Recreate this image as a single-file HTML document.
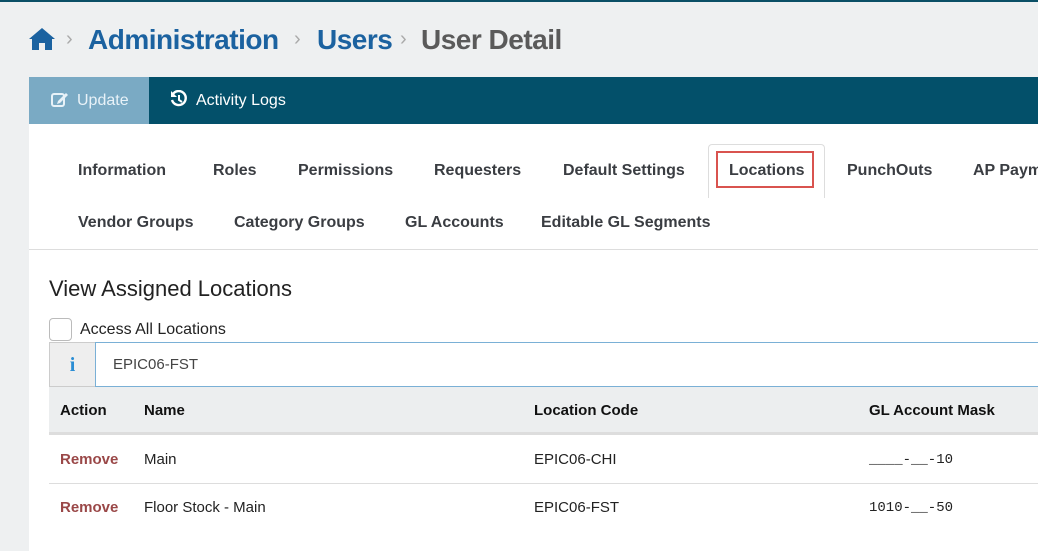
<!DOCTYPE html>
<html><head><style>
*{box-sizing:border-box;margin:0;padding:0}
body{width:1038px;height:551px;overflow:hidden;background:#eef0f1;font-family:"Liberation Sans",sans-serif;position:relative}
.abs{position:absolute;white-space:nowrap}
.bc{top:24px;font-size:28px;font-weight:bold;letter-spacing:-0.5px}
.bar{left:29px;top:77px;width:1009px;height:47px;background:#03506a}
.upd{left:29px;top:77px;width:120px;height:47px;background:#7aaac4;color:#e8f2f8;font-size:16px;line-height:47px;padding-left:22px}
.act{left:170px;top:77px;color:#fff;font-size:16px;line-height:47px}
.card{left:29px;top:124px;width:1009px;height:427px;background:#fff}
.tab{font-size:16px;font-weight:bold;color:#3a3d42}
.th{font-size:15px;font-weight:bold;color:#111}
.td{font-size:15px;color:#222}
.rm{font-size:15px;font-weight:bold;color:#9a4848}
.mono{font-family:"Liberation Mono",monospace;font-size:14px;color:#222}
</style></head><body>
<div class="abs" style="left:0;top:0;width:1038px;height:2px;background:#0a4f66"></div>
<svg class="abs" style="left:28px;top:27px" width="28" height="24" viewBox="0 0 28 24"><path d="M14 1 L1 12 L4 12 L4 23 L11 23 L11 16 L17 16 L17 23 L24 23 L24 12 L27 12 Z" fill="#1b62a0"/></svg>
<div class="abs" style="left:66px;color:#aaa;font-size:20px;top:28px">›</div>
<div class="abs bc" style="left:88px;color:#1b62a0">Administration</div>
<div class="abs" style="left:294px;color:#aaa;font-size:20px;top:28px">›</div>
<div class="abs bc" style="left:317px;color:#1b62a0">Users</div>
<div class="abs" style="left:400px;color:#aaa;font-size:20px;top:28px">›</div>
<div class="abs bc" style="left:421px;color:#5a5a5a">User Detail</div>
<div class="abs bar"></div>
<div class="abs upd"><svg width="18" height="16" viewBox="0 0 18 16" style="vertical-align:-2px;margin-right:8px"><rect x="1" y="3" width="12" height="12" rx="2" fill="none" stroke="#e8f2f8" stroke-width="2"/><path d="M7 10 L15 2 L17 4 L9 12 L6 13 Z" fill="#e8f2f8"/></svg>Update</div>
<div class="abs act"><svg width="18" height="18" viewBox="0 0 18 18" style="vertical-align:-3px;margin-right:8px"><path d="M3 4 A7 7 0 1 1 2 10" fill="none" stroke="#fff" stroke-width="2.4"/><path d="M1 1 L1 7 L7 7 Z" fill="#fff"/><path d="M9 5 L9 10 L12 12" fill="none" stroke="#fff" stroke-width="2"/></svg>Activity Logs</div>
<div class="abs card"></div>
<div class="abs" style="left:708px;top:144px;width:117px;height:54px;border:1px solid #ddd;border-bottom:none;border-radius:4px 4px 0 0;background:#fff"></div>
<div class="abs" style="left:716px;top:151px;width:98px;height:37px;border:2px solid #d9534f"></div>
<div class="abs tab" style="left:78px;top:162px">Information</div>
<div class="abs tab" style="left:213px;top:162px">Roles</div>
<div class="abs tab" style="left:298px;top:162px">Permissions</div>
<div class="abs tab" style="left:434px;top:162px">Requesters</div>
<div class="abs tab" style="left:563px;top:162px">Default Settings</div>
<div class="abs tab" style="left:729px;top:162px">Locations</div>
<div class="abs tab" style="left:847px;top:162px">PunchOuts</div>
<div class="abs tab" style="left:973px;top:162px">AP Payments</div>
<div class="abs tab" style="left:78px;top:214px">Vendor Groups</div>
<div class="abs tab" style="left:234px;top:214px">Category Groups</div>
<div class="abs tab" style="left:405px;top:214px">GL Accounts</div>
<div class="abs tab" style="left:541px;top:214px">Editable GL Segments</div>
<div class="abs" style="left:29px;top:249px;width:1009px;height:1px;background:#ddd"></div>
<div class="abs" style="left:49px;top:276px;font-size:22px;color:#222">View Assigned Locations</div>
<div class="abs" style="left:49px;top:318px;width:23px;height:23px;border:1px solid #bbb;border-radius:4px"></div>
<div class="abs" style="left:80px;top:321px;font-size:16px;color:#222">Access All Locations</div>
<div class="abs" style="left:49px;top:342px;width:47px;height:45px;background:#eee;border:1px solid #ccc;color:#2a8dd4;font-weight:bold;font-size:20px;text-align:center;line-height:44px;font-family:'Liberation Serif',serif">i</div>
<div class="abs" style="left:95px;top:342px;width:943px;height:45px;border:1px solid #7ab0d6;border-right:none"></div>
<div class="abs" style="left:113px;top:356px;font-size:15px;color:#444">EPIC06-FST</div>
<div class="abs" style="left:49px;top:387px;width:989px;height:48px;background:#eceeef;border-bottom:3px solid #ddd"></div>
<div class="abs th" style="left:60px;top:402px">Action</div>
<div class="abs th" style="left:144px;top:402px">Name</div>
<div class="abs th" style="left:534px;top:402px">Location Code</div>
<div class="abs th" style="left:869px;top:402px">GL Account Mask</div>
<div class="abs rm" style="left:60px;top:451px">Remove</div>
<div class="abs td" style="left:144px;top:451px">Main</div>
<div class="abs td" style="left:534px;top:451px">EPIC06-CHI</div>
<div class="abs mono" style="left:869px;top:452px">____-__-10</div>
<div class="abs" style="left:49px;top:483px;width:989px;height:1px;background:#ddd"></div>
<div class="abs rm" style="left:60px;top:499px">Remove</div>
<div class="abs td" style="left:144px;top:499px">Floor Stock - Main</div>
<div class="abs td" style="left:534px;top:499px">EPIC06-FST</div>
<div class="abs mono" style="left:869px;top:500px">1010-__-50</div>
</body></html>
